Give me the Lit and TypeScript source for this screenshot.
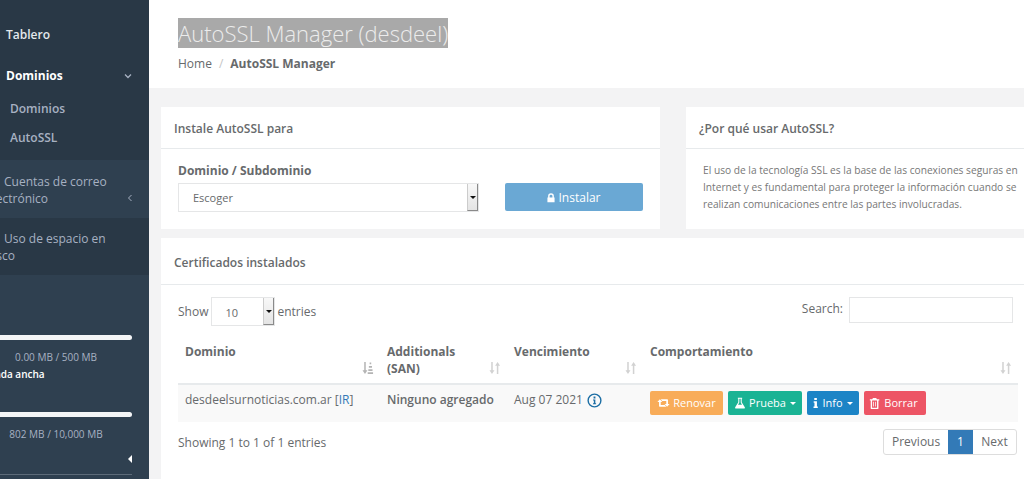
import { LitElement, css, html, svg } from 'lit';
import { customElement } from 'lit/decorators.js';

const icons = {
  lock: svg`<path d="M3 7V5a4 4 0 0 1 8 0v2h1v6.5H2V7zm2 0h4V5a2 2 0 0 0-4 0z" fill="currentColor"/>`,
  retweet: svg`<path d="M3.5 2 6.6 5.2H4.6V9H9.6l1.8 2H3.4a.9.9 0 0 1-.9-.9V5.2H.5zM4.6 2h8a.9.9 0 0 1 .9.9v4.9h2L12.4 11 9.3 7.8h2.1V4H6.4z" fill="currentColor"/>`,
  flask: svg`<path d="M4.5 1h5v1H9v4l3.6 6a1 1 0 0 1-.9 1.5H2.3a1 1 0 0 1-.9-1.5L5 6V2h-.5zM6.2 2v4.4L4.7 9h4.6L7.8 6.4V2z" fill="currentColor"/>`,
  info: svg`<path d="M1.5 1.2h3v2.3h-3zM.8 5h3.8v6.2h1v1.6H.6v-1.6h1.1V6.6H.8z" fill="currentColor"/>`,
  trash: svg`<path d="M4.6 1.2h3.8l.8 1.5H12v1.5h-1V13a1 1 0 0 1-1 1H3a1 1 0 0 1-1-1V4.2H1V2.7h2.8zM3.6 4.2v8.2h5.8V4.2zM4.8 5.4h.9v5.8h-.9zm2.5 0h.9v5.8h-.9z" fill="currentColor"/>`,
  sortBoth: svg`<path d="M2 1h1.4v7.5H5L2.7 12 .4 8.5H2zM8.6 12H7.2V4.5H5.6L7.9 1l2.3 3.5H8.6z" fill="currentColor"/>`,
  sortAmount: svg`<path d="M2 1h1.4v7.5H5L2.7 12 .4 8.5H2zM7 1.5h1.5v1.6H7zM6.3 4.6h2.9v1.6H6.3zM5.8 7.7h3.9v1.6H5.8zM5.2 10.4h5v1.6h-5z" fill="currentColor"/>`,
};

@customElement('app-root')
export class AppRoot extends LitElement {
  static styles = css`
    :host {
      display: block;
      width: 1024px;
      height: 479px;
      overflow: hidden;
      font-family: 'Open Sans', 'Liberation Sans', sans-serif;
      font-size: 12px;
      color: #676a6c;
      background: #f3f3f4;
    }
    .page { display: flex; height: 479px; }

    .sidebar { flex: 0 0 149px; overflow: hidden; background: #2f4050; color: #a7b1c2; }
    .side-inner { width: 167px; margin-left: -18px; }
    .nav-dark { background: #293846; }
    .nav-top { height: 160px; padding-top: 26px; box-sizing: border-box; }
    .nav-link { display: flex; justify-content: space-between; padding: 0 17px 0 24px; line-height: 18px; font-weight: 600; }
    .nav-link.active { color: #fff; font-weight: 700; margin-top: 23px; }
    .nav-link.first { color: #e4e8ec; }
    .sub { padding-left: 28px; line-height: 18px; font-weight: 600; }
    .sub.one { margin-top: 15px; }
    .sub.two { margin-top: 11px; }
    .nav-wrap { position: relative; box-sizing: border-box; padding: 13px 35px 0 4px; line-height: 17px; font-weight: 500; text-indent: 18px; height: 58px; }
    .nav-wrap.light { background: #2f4050; }
    .nav-wrap.dark { background: #293846; height: 57px; padding-top: 12px; }
    .caret { position: absolute; right: 16px; top: 34px; }
    .usage { width: 150px; padding-top: 60px; text-align: center; font-size: 10px; }
    .usage-text { margin-top: 11px; padding-right: 2px; line-height: 12px; }
    .bar { height: 5px; background: #f4f5f6; border-radius: 0 3px 3px 0; }
    .usage-label { margin-top: 5px; line-height: 12px; font-weight: 600; color: #fff; text-align: left; }
    .bar.second { margin-top: 32px; }
    .toggle { display: flex; justify-content: flex-end; margin-top: 15px; }
    .toggle i { width: 0; height: 0; border: 4px solid transparent; border-left: 0; border-right: 4px solid #fff; }
    .rule { height: 1px; background: #5d6b79; margin-top: 11px; }

    .main { flex: 1; min-width: 0; overflow: hidden; }
    .header { height: 88px; box-sizing: border-box; background: #fff; padding: 18px 29px 0; }
    .title { display: inline-block; height: 30px; line-height: 30px; font-size: 22px; font-weight: 300; background: #a9a9a9; color: #ececec; white-space: nowrap; }
    .crumbs { margin-top: 7px; line-height: 18px; font-size: 12px; display: flex; gap: 7px; }
    .crumbs span { color: #c5c5c5; }
    .crumbs b { font-weight: 700; }

    .content { padding: 19px 0 0 12px; }
    .row { display: flex; gap: 26px; }
    .card { background: #fff; }
    .card.install { flex: 0 0 497px; height: 122px; }
    .card.why { flex: 0 0 350px; height: 122px; }
    .card-title { height: 42px; box-sizing: border-box; border-bottom: 1px solid #e7eaec; padding: 0 13px; line-height: 44px; font-weight: 600; font-size: 12px; white-space: nowrap; }
    .card-title.tall { height: 47px; line-height: 49px; }
    .install-body { display: flex; align-items: flex-end; gap: 26px; padding: 13px 17px 0; }
    .field-label { font-weight: 700; line-height: 18px; margin-bottom: 3px; font-size: 12px; }
    .select { box-sizing: border-box; display: flex; justify-content: space-between; border: 1px solid #e5e6e7; height: 29px; font-size: 11px; }
    .select.wide { width: 301px; padding-left: 14px; line-height: 28px; }
    .select.small { width: 64px; margin-right: -1px; padding-left: 13px; line-height: 29px; }
    .stepper { display: flex; flex: 0 0 9px; align-items: center; justify-content: center; background: linear-gradient(#f8f8f8, #e4e4e4); border-left: 1px solid #ccc; border-right: 1px solid #8a8a8a; border-bottom: 1px solid #8a8a8a; }
    .stepper i { width: 0; height: 0; border: 3px solid transparent; border-top: 3px solid #111; border-bottom: 0; }
    .install-btn { display: flex; align-items: center; justify-content: center; gap: 3px; width: 138px; height: 28px; box-sizing: border-box; padding-right: 2px; margin-bottom: 1px; background: #6aa8d4; border-radius: 2px; color: #fff; font-size: 12px; }
    .install-btn svg { width: 10px; height: 11px; }
    .why-text { margin: 0; padding: 13px 0 0 17px; width: 325px; font-size: 10.2px; line-height: 17px; color: #777; }

    .card.table { margin-top: 9px; width: 875px; height: 241px; }
    .table-body { padding: 12px 6px 0 17px; }
    .tools { display: flex; justify-content: space-between; align-items: flex-start; width: 835px; height: 29px; }
    .length { display: flex; gap: 3px; align-items: center; line-height: 29px; }
    .search { display: flex; gap: 6px; line-height: 24px; }
    .search-box { width: 164px; height: 26px; box-sizing: border-box; border: 1px solid #e5e6e7; }
    .grid { border-collapse: collapse; table-layout: fixed; width: 840px; margin-top: 17px; }
    .grid th { position: relative; vertical-align: top; text-align: left; padding: 0 7px 6px; height: 34px; font-weight: 700; line-height: 17px; font-size: 12px; border-bottom: 2px solid #e7eaec; box-sizing: content-box; }
    .sort { position: absolute; right: 6px; bottom: 8px; width: 12px; height: 14px; color: #d2d2d2; }
    .sort.on { color: #b4b4b4; }
    .grid td { background: #f9f9f9; height: 31px; padding: 6px 7px 0; vertical-align: top; line-height: 18px; font-size: 12px; white-space: nowrap; box-sizing: content-box; }
    .grid td b { font-weight: 600; }
    .link { color: #337ab7; }
    .date { display: inline-flex; align-items: center; gap: 4px; }
    .date svg { width: 15px; height: 15px; color: #1c6ea4; }
    .actions { display: flex; gap: 5px; }
    .btn { display: flex; align-items: center; justify-content: center; gap: 3px; height: 24px; box-sizing: border-box; border-radius: 2px; color: #fff; font-size: 11px; }
    .btn svg { height: 12px; width: 12px; }
    .btn .drop { width: 0; height: 0; border: 3px solid transparent; border-top: 3px solid #fff; border-bottom: 0; margin-left: 1px; }
    .renew { width: 73px; background: #f8ac59; }
    .test { width: 74px; background: #1ab394; }
    .info { width: 52px; background: #1c84c6; }
    .remove { width: 62px; padding-right: 3px; background: #ed5565; }
    .foot { display: flex; justify-content: space-between; width: 839px; margin-top: 7px; }
    .foot-text { line-height: 28px; }
    .pager { display: flex; height: 26px; box-sizing: border-box; border: 1px solid #ddd; border-radius: 3px; line-height: 24px; }
    .pager span { display: block; }
    .pager .prev { width: 64px; box-sizing: border-box; padding-left: 8px; }
    .pager .cur { width: 25px; text-align: center; background: #337ab7; color: #fff; }
    .pager .next { width: 43px; text-align: center; }
  `;

  private icon(name: keyof typeof icons, box = '0 0 14 14') {
    return html`<svg viewBox=${box} aria-hidden="true">${icons[name]}</svg>`;
  }

  private renderSidebar() {
    return html`
      <aside class="sidebar">
        <div class="side-inner">
          <div class="nav-dark nav-top">
            <div class="nav-link first">Tablero</div>
            <div class="nav-link active">Dominios
              <svg width="8" height="18" viewBox="0 0 8 18"><path d="M1 7.5 4 10.5 7 7.5" fill="none" stroke="#a7b1c2" stroke-width="1.3"/></svg>
            </div>
            <div class="sub one">Dominios</div>
            <div class="sub two">AutoSSL</div>
          </div>
          <div class="nav-wrap light">Cuentas de correo electrónico
            <svg class="caret" width="6" height="8" viewBox="0 0 6 8"><path d="M4.5 1 1.5 4 4.5 7" fill="none" stroke="#a7b1c2"/></svg>
          </div>
          <div class="nav-wrap dark">Uso de espacio en disco</div>
          <div class="usage">
            <div class="bar"></div>
            <div class="usage-text">0.00 MB / 500 MB</div>
            <div class="usage-label">Banda ancha</div>
            <div class="bar second"></div>
            <div class="usage-text">802 MB / 10,000 MB</div>
            <div class="toggle"><i></i></div>
            <div class="rule"></div>
          </div>
        </div>
      </aside>
    `;
  }

  private renderTable() {
    const columns = [
      { label: html`Dominio`, width: 202, active: true },
      { label: html`Additionals<br />(SAN)`, width: 127, active: false },
      { label: html`Vencimiento`, width: 136, active: false },
      { label: html`Comportamiento`, width: 375, active: false },
    ];
    return html`
      <table class="grid">
        <colgroup>${columns.map((c) => html`<col style="width:${c.width}px" />`)}</colgroup>
        <thead>
          <tr>
            ${columns.map(
              (c) => html`<th>
                ${c.label}
                <svg class="sort ${c.active ? 'on' : ''}" viewBox="0 0 11 13">${c.active ? icons.sortAmount : icons.sortBoth}</svg>
              </th>`,
            )}
          </tr>
        </thead>
        <tbody>
          <tr>
            <td>desdeelsurnoticias.com.ar [<span class="link">IR</span>]</td>
            <td><b>Ninguno agregado</b></td>
            <td>
              <span class="date">Aug 07 2021
                <svg viewBox="0 0 16 16"><circle cx="8" cy="8" r="6.8" fill="none" stroke="currentColor" stroke-width="1.5"/><path d="M7 3.8h2v2H7zM6.4 7h2.5v4h.8v1.1H6.4V11h.9V8.1h-.9z" fill="currentColor"/></svg>
              </span>
            </td>
            <td>
              <div class="actions">
                <div class="btn renew"><svg viewBox="0 0 16 13" style="width:13px">${icons.retweet}</svg>Renovar</div>
                <div class="btn test">${this.icon('flask')}Prueba<i class="drop"></i></div>
                <div class="btn info"><svg viewBox="0 0 7 14" style="width:6px">${icons.info}</svg>Info<i class="drop"></i></div>
                <div class="btn remove">${this.icon('trash')}Borrar</div>
              </div>
            </td>
          </tr>
        </tbody>
      </table>
    `;
  }

  render() {
    return html`
      <div class="page">
        ${this.renderSidebar()}
        <main class="main">
          <header class="header">
            <div class="title">AutoSSL Manager (desdeel)</div>
            <div class="crumbs">Home <span>/</span> <b>AutoSSL Manager</b></div>
          </header>
          <div class="content">
            <div class="row">
              <section class="card install">
                <div class="card-title">Instale AutoSSL para</div>
                <div class="install-body">
                  <div>
                    <div class="field-label">Dominio / Subdominio</div>
                    <div class="select wide">Escoger<div class="stepper"><i></i></div></div>
                  </div>
                  <div class="install-btn">${this.icon('lock')}Instalar</div>
                </div>
              </section>
              <section class="card why">
                <div class="card-title">¿Por qué usar AutoSSL?</div>
                <p class="why-text">El uso de la tecnología SSL es la base de las conexiones seguras en Internet y es fundamental para proteger la información cuando se realizan comunicaciones entre las partes involucradas.</p>
              </section>
            </div>
            <section class="card table">
              <div class="card-title tall">Certificados instalados</div>
              <div class="table-body">
                <div class="tools">
                  <div class="length">Show <div class="select small">10<div class="stepper"><i></i></div></div> entries</div>
                  <div class="search">Search: <div class="search-box"></div></div>
                </div>
                ${this.renderTable()}
                <div class="foot">
                  <div class="foot-text">Showing 1 to 1 of 1 entries</div>
                  <div class="pager"><span class="prev">Previous</span><span class="cur">1</span><span class="next">Next</span></div>
                </div>
              </div>
            </section>
          </div>
        </main>
      </div>
    `;
  }
}
